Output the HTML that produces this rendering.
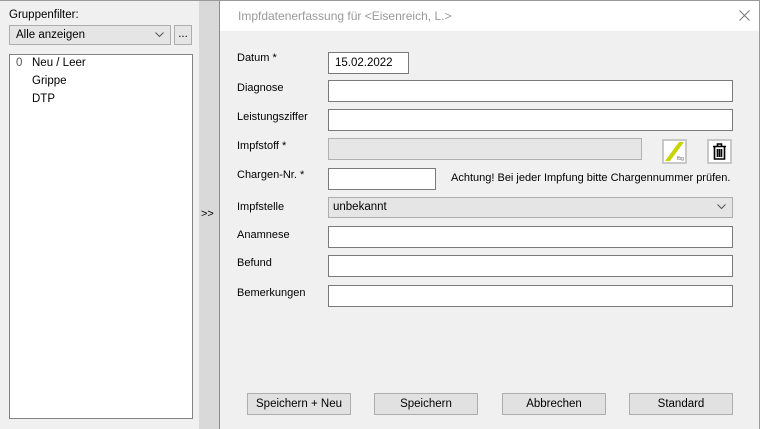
<!DOCTYPE html>
<html><head><style>
*{margin:0;padding:0;box-sizing:border-box}
body{width:760px;height:429px;background:#f0f0f0;font-family:"Liberation Sans",sans-serif;font-size:11.5px;color:#000;position:relative;overflow:hidden}
.a{position:absolute}
.in{position:absolute;background:#fff;border:1px solid #7a7a7a}
.lb{position:absolute;left:237px;font-size:11px}
.btn{position:absolute;top:393px;height:22px;width:104px;background:#e1e1e1;border:1px solid #adadad;text-align:center;line-height:20px;font-size:11.5px}
.chev{position:absolute;right:6px;top:6px}
</style></head><body>
<div class="a" style="left:0;top:0;width:760px;height:1px;background:#9a9a9a"></div>
<div class="a" style="left:9px;top:9px">Gruppenfilter:</div>
<div class="a" style="left:9px;top:25px;width:162px;height:20px;background:#e5e5e5;border:1px solid #adadad;padding-left:6px;line-height:18px">Alle anzeigen<svg class="chev" width="9" height="6"><path d="M0.5 0.5L4.5 4.5L8.5 0.5" stroke="#555" fill="none"/></svg></div>
<div class="a" style="left:174px;top:25px;width:18px;height:20px;background:#e5e5e5;border:1px solid #adadad;text-align:center;line-height:16px">...</div>
<div class="a" style="left:9px;top:54px;width:184px;height:365px;background:#fff;border:1px solid #828282"></div>
<div class="a" style="left:16px;top:57px;color:#555">0</div>
<div class="a" style="left:32px;top:57px">Neu / Leer</div>
<div class="a" style="left:32px;top:75px">Grippe</div>
<div class="a" style="left:32px;top:93px">DTP</div>
<div class="a" style="left:199px;top:1px;width:20px;height:428px;background:#d9d9d9"></div>
<div class="a" style="left:201px;top:208px;font-size:11px">&gt;&gt;</div>
<div class="a" style="left:219px;top:1px;width:541px;height:428px;background:#f0f0f0;border-left:1px solid #8c8c8c;border-right:1px solid #9a9a9a"></div>
<div class="a" style="left:220px;top:1px;width:539px;height:30px;background:#fff"></div>
<div class="a" style="left:238px;top:9px;color:#999;font-size:12px">Impfdatenerfassung für &lt;Eisenreich, L.&gt;</div>
<svg class="a" style="left:739px;top:10px" width="11" height="11"><path d="M0.5 0.5L10.5 10.5M10.5 0.5L0.5 10.5" stroke="#777" stroke-width="1"/></svg>
<div class="lb" style="top:52px">Datum *</div>
<div class="lb" style="top:82px">Diagnose</div>
<div class="lb" style="top:111px">Leistungsziffer</div>
<div class="lb" style="top:140px">Impfstoff *</div>
<div class="lb" style="top:169px">Chargen-Nr. *</div>
<div class="lb" style="top:201px">Impfstelle</div>
<div class="lb" style="top:229px">Anamnese</div>
<div class="lb" style="top:257px">Befund</div>
<div class="lb" style="top:287px">Bemerkungen</div>
<div class="in" style="left:328px;top:52px;width:81px;height:22px;padding:4px 0 0 6px">15.02.2022</div>
<div class="in" style="left:328px;top:80px;width:405px;height:22px"></div>
<div class="in" style="left:328px;top:109px;width:405px;height:22px"></div>
<div class="in" style="left:328px;top:138px;width:314px;height:22px;background:#e6e6e6;border-color:#b0b0b0"></div>
<div class="a" style="left:662px;top:139px;width:25px;height:25px;border:2px solid #c8c8c8;background:#fff;overflow:hidden">
<svg width="21" height="21"><polygon points="1,20 6,20 20,1 15,1" fill="#c8d400"/><text x="13" y="19" font-size="5" fill="#666">fbg</text></svg></div>
<div class="a" style="left:707px;top:139px;width:25px;height:25px;border:2px solid #c8c8c8;background:#fff">
<svg width="21" height="21"><path d="M4 5.5h13M8.5 5V3h4v2M5.5 6v12h10V6M8.5 8v8M10.5 8v8M12.5 8v8" stroke="#000" stroke-width="1.6" fill="none"/></svg></div>
<div class="in" style="left:328px;top:168px;width:108px;height:22px"></div>
<div class="a" style="left:451px;top:172px;font-size:11px">Achtung! Bei jeder Impfung bitte Chargennummer prüfen.</div>
<div class="a" style="left:328px;top:197px;width:405px;height:21px;background:#e5e5e5;border:1px solid #adadad;padding:3px 0 0 4px">unbekannt<svg class="chev" width="9" height="6"><path d="M0.5 0.5L4.5 4.5L8.5 0.5" stroke="#555" fill="none"/></svg></div>
<div class="in" style="left:328px;top:226px;width:405px;height:22px"></div>
<div class="in" style="left:328px;top:255px;width:405px;height:22px"></div>
<div class="in" style="left:328px;top:285px;width:405px;height:22px"></div>
<div class="btn" style="left:247px">Speichern + Neu</div>
<div class="btn" style="left:374px">Speichern</div>
<div class="btn" style="left:502px">Abbrechen</div>
<div class="btn" style="left:629px">Standard</div>
</body></html>
